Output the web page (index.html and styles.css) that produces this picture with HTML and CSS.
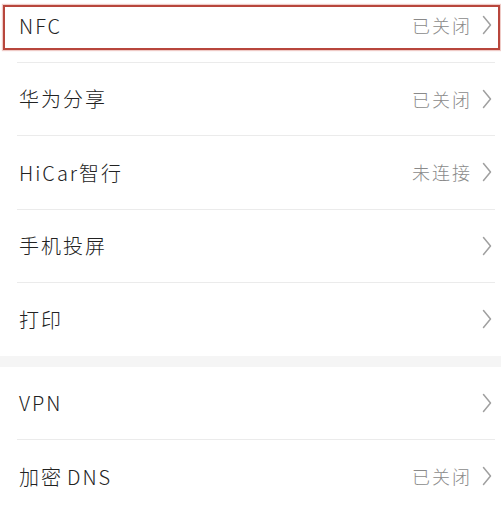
FILE: index.html
```html
<!DOCTYPE html>
<html lang="zh-CN">
<head>
<meta charset="utf-8">
<title>更多连接</title>
<link rel="stylesheet" href="styles.css">
</head>
<body>
<div class="page">
  <section class="group first">
    <div class="row highlighted">
      <span class="label">NFC</span>
      <span class="value">已关闭</span>
      <svg class="chev" viewBox="0 0 10 20" aria-hidden="true"><path d="M1.5 1.5 L8.5 10 L1.5 18.5"/></svg>
    </div>
    <div class="row">
      <span class="label">华为分享</span>
      <span class="value">已关闭</span>
      <svg class="chev" viewBox="0 0 10 20" aria-hidden="true"><path d="M1.5 1.5 L8.5 10 L1.5 18.5"/></svg>
    </div>
    <div class="row">
      <span class="label">HiCar智行</span>
      <span class="value">未连接</span>
      <svg class="chev" viewBox="0 0 10 20" aria-hidden="true"><path d="M1.5 1.5 L8.5 10 L1.5 18.5"/></svg>
    </div>
    <div class="row">
      <span class="label">手机投屏</span>
      <span class="value"></span>
      <svg class="chev" viewBox="0 0 10 20" aria-hidden="true"><path d="M1.5 1.5 L8.5 10 L1.5 18.5"/></svg>
    </div>
    <div class="row">
      <span class="label">打印</span>
      <span class="value"></span>
      <svg class="chev" viewBox="0 0 10 20" aria-hidden="true"><path d="M1.5 1.5 L8.5 10 L1.5 18.5"/></svg>
    </div>
  </section>
  <div class="gap"></div>
  <section class="group">
    <div class="row">
      <span class="label">VPN</span>
      <span class="value"></span>
      <svg class="chev" viewBox="0 0 10 20" aria-hidden="true"><path d="M1.5 1.5 L8.5 10 L1.5 18.5"/></svg>
    </div>
    <div class="row">
      <span class="label">加密<span class="sp"></span>DNS</span>
      <span class="value">已关闭</span>
      <svg class="chev" viewBox="0 0 10 20" aria-hidden="true"><path d="M1.5 1.5 L8.5 10 L1.5 18.5"/></svg>
    </div>
  </section>
</div>
</body>
</html>
```
FILE: styles.css
```css
html, body {
  margin: 0;
  padding: 0;
  background: #ffffff;
}
body {
  width: 501px;
  height: 511px;
  overflow: hidden;
  font-family: "Noto Sans CJK SC", "Noto Sans", sans-serif;
}
.page {
  display: flex;
  flex-direction: column;
}
.group {
  display: flex;
  flex-direction: column;
  padding-left: 17px;
  padding-right: 6px;
}
.group.first {
  margin-top: -11px;
}
.row {
  position: relative;
  display: flex;
  align-items: center;
  height: 72.5px;
  border-bottom: 1px solid #ebebeb;
}
.group .row:last-child {
  border-bottom: none;
}
.highlighted::after {
  content: "";
  position: absolute;
  left: -14px;
  right: -5px;
  top: 16px;
  bottom: 12px;
  border: 2px solid #b8463c;
  box-shadow: 0 0 1px 1px rgba(220, 140, 130, 0.45);
  pointer-events: none;
}
.label {
  flex: 1;
  padding-left: 2px;
  font-size: 20px;
  color: #222222;
  letter-spacing: 2px;
  font-weight: 300;
}
.sp {
  display: inline-block;
  width: 4px;
}
.value {
  font-size: 18px;
  color: #8a8a8a;
  letter-spacing: 2px;
  margin-right: 10px;
  font-weight: 300;
}
.chev {
  width: 10px;
  height: 20px;
  margin-right: 3px;
  fill: none;
  stroke: #a0a0a0;
  stroke-width: 1.5;
  stroke-linecap: round;
  stroke-linejoin: round;
}
.gap {
  height: 11px;
  background: #f5f5f5;
}
```
